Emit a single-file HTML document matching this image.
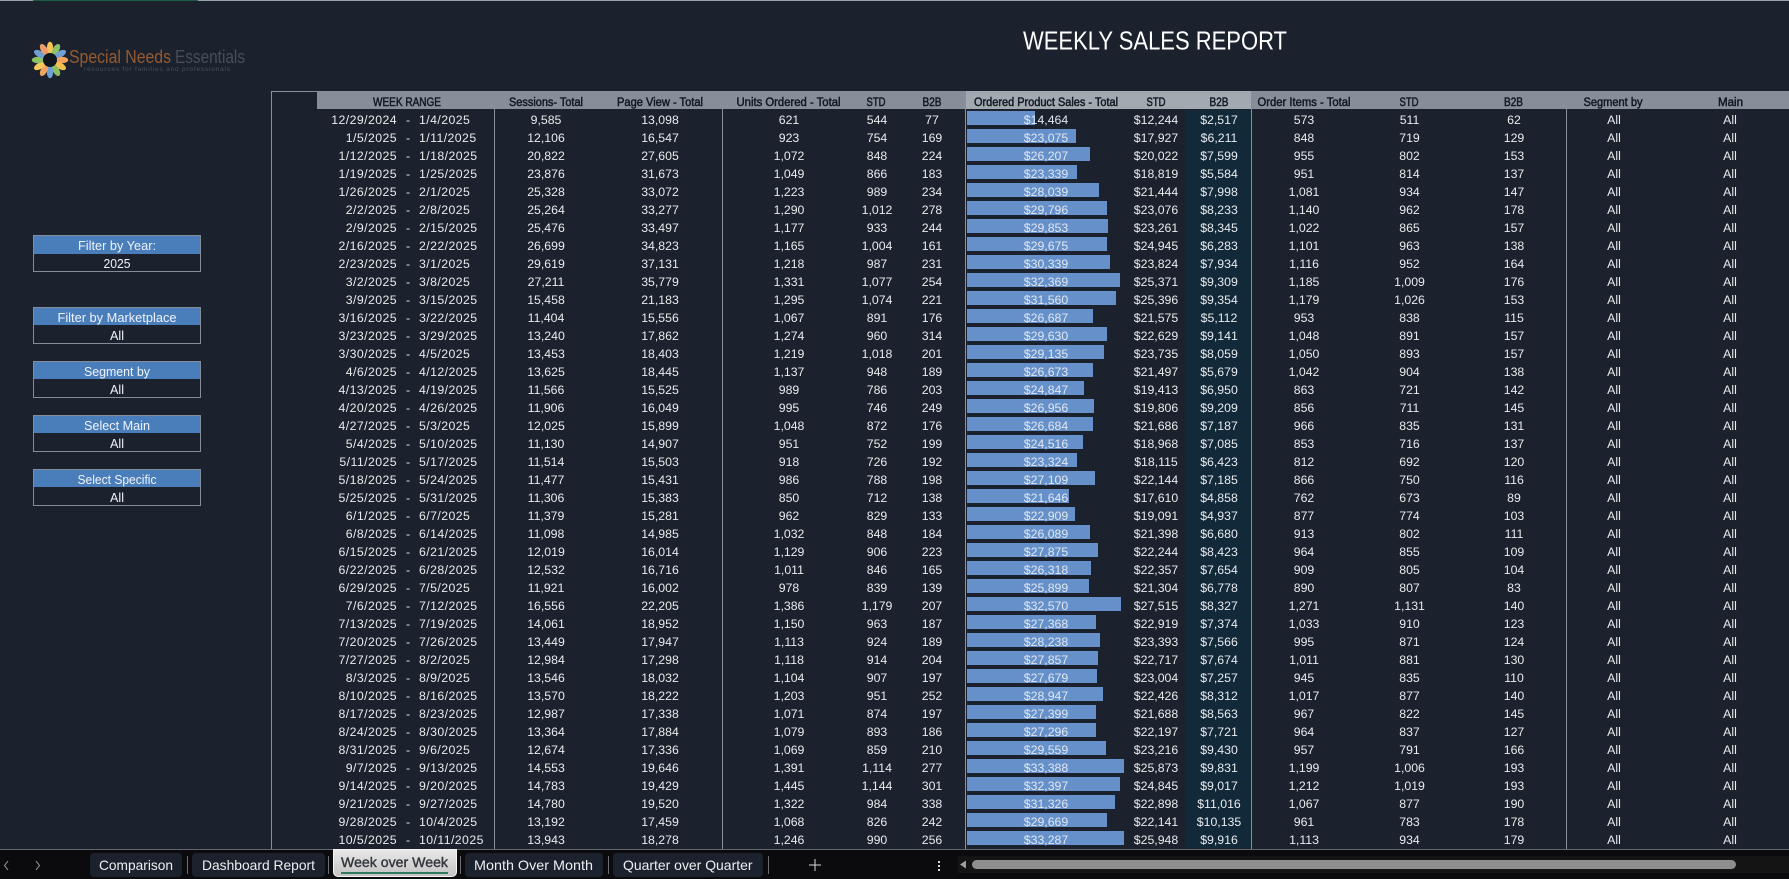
<!DOCTYPE html>
<html><head><meta charset="utf-8"><title>Weekly Sales Report</title>
<style>
html,body{margin:0;padding:0;width:1789px;height:879px;overflow:hidden;background:#1b222d}
body{position:relative;font-family:"Liberation Sans",sans-serif}
.a{position:absolute}
table{position:absolute;left:317px;top:110px;width:1480px;table-layout:fixed;border-collapse:collapse;color:#e9ebee;font-size:12.3px}
td{height:16px;padding:2px 0 0;line-height:16px;text-align:center;white-space:nowrap}
td:nth-child(1){text-align:right;letter-spacing:.42px}
td:nth-child(3){text-align:left;letter-spacing:.42px}
td:nth-child(9){background-image:linear-gradient(#6590c9,#6590c9);background-repeat:no-repeat;background-position:1px 1px;color:#dfe7f2}
td:nth-child(11){background-color:#12293a}
svg{position:absolute;left:0;top:0}
.d{position:absolute;width:1px;top:109px;height:740px;background:#87909b}
</style></head><body>
<div class="a" style="left:0;top:0;width:1789px;height:1px;background:#9aa0a8"></div>
<div class="a" style="left:33px;top:0;width:165px;height:1px;background:#1d5c45"></div>

<div class="a" style="left:317px;top:91px;width:649px;height:18px;background:#868e99"></div>
<div class="a" style="left:966px;top:91px;width:285px;height:18px;background:#a3a9b0"></div>
<div class="a" style="left:1251px;top:91px;width:538px;height:18px;background:#868e99"></div>
<div class="a" style="left:271px;top:91px;width:46px;height:1px;background:#87909b"></div>
<div class="a" style="left:271px;top:91px;width:1px;height:758px;background:#87909b"></div>

<table><colgroup><col style="width:80px"><col style="width:22px"><col style="width:75px"><col style="width:104px"><col style="width:124px"><col style="width:134px"><col style="width:42px"><col style="width:68px"><col style="width:160px"><col style="width:60px"><col style="width:66px"><col style="width:104px"><col style="width:107px"><col style="width:102px"><col style="width:98px"><col style="width:134px"></colgroup>
<tr><td>12/29/2024<td>-<td>1/4/2025<td>9,585<td>13,098<td>621<td>544<td>77<td style="background-size:68px 14px">$14,464<td>$12,244<td>$2,517<td>573<td>511<td>62<td>All<td>All
<tr><td>1/5/2025<td>-<td>1/11/2025<td>12,106<td>16,547<td>923<td>754<td>169<td style="background-size:109px 14px">$23,075<td>$17,927<td>$6,211<td>848<td>719<td>129<td>All<td>All
<tr><td>1/12/2025<td>-<td>1/18/2025<td>20,822<td>27,605<td>1,072<td>848<td>224<td style="background-size:123px 14px">$26,207<td>$20,022<td>$7,599<td>955<td>802<td>153<td>All<td>All
<tr><td>1/19/2025<td>-<td>1/25/2025<td>23,876<td>31,673<td>1,049<td>866<td>183<td style="background-size:110px 14px">$23,339<td>$18,819<td>$5,584<td>951<td>814<td>137<td>All<td>All
<tr><td>1/26/2025<td>-<td>2/1/2025<td>25,328<td>33,072<td>1,223<td>989<td>234<td style="background-size:132px 14px">$28,039<td>$21,444<td>$7,998<td>1,081<td>934<td>147<td>All<td>All
<tr><td>2/2/2025<td>-<td>2/8/2025<td>25,264<td>33,277<td>1,290<td>1,012<td>278<td style="background-size:140px 14px">$29,796<td>$23,076<td>$8,233<td>1,140<td>962<td>178<td>All<td>All
<tr><td>2/9/2025<td>-<td>2/15/2025<td>25,476<td>33,497<td>1,177<td>933<td>244<td style="background-size:141px 14px">$29,853<td>$23,261<td>$8,345<td>1,022<td>865<td>157<td>All<td>All
<tr><td>2/16/2025<td>-<td>2/22/2025<td>26,699<td>34,823<td>1,165<td>1,004<td>161<td style="background-size:140px 14px">$29,675<td>$24,945<td>$6,283<td>1,101<td>963<td>138<td>All<td>All
<tr><td>2/23/2025<td>-<td>3/1/2025<td>29,619<td>37,131<td>1,218<td>987<td>231<td style="background-size:143px 14px">$30,339<td>$23,824<td>$7,934<td>1,116<td>952<td>164<td>All<td>All
<tr><td>3/2/2025<td>-<td>3/8/2025<td>27,211<td>35,779<td>1,331<td>1,077<td>254<td style="background-size:153px 14px">$32,369<td>$25,371<td>$9,309<td>1,185<td>1,009<td>176<td>All<td>All
<tr><td>3/9/2025<td>-<td>3/15/2025<td>15,458<td>21,183<td>1,295<td>1,074<td>221<td style="background-size:149px 14px">$31,560<td>$25,396<td>$9,354<td>1,179<td>1,026<td>153<td>All<td>All
<tr><td>3/16/2025<td>-<td>3/22/2025<td>11,404<td>15,556<td>1,067<td>891<td>176<td style="background-size:126px 14px">$26,687<td>$21,575<td>$5,112<td>953<td>838<td>115<td>All<td>All
<tr><td>3/23/2025<td>-<td>3/29/2025<td>13,240<td>17,862<td>1,274<td>960<td>314<td style="background-size:140px 14px">$29,630<td>$22,629<td>$9,141<td>1,048<td>891<td>157<td>All<td>All
<tr><td>3/30/2025<td>-<td>4/5/2025<td>13,453<td>18,403<td>1,219<td>1,018<td>201<td style="background-size:137px 14px">$29,135<td>$23,735<td>$8,059<td>1,050<td>893<td>157<td>All<td>All
<tr><td>4/6/2025<td>-<td>4/12/2025<td>13,625<td>18,445<td>1,137<td>948<td>189<td style="background-size:126px 14px">$26,673<td>$21,497<td>$5,679<td>1,042<td>904<td>138<td>All<td>All
<tr><td>4/13/2025<td>-<td>4/19/2025<td>11,566<td>15,525<td>989<td>786<td>203<td style="background-size:117px 14px">$24,847<td>$19,413<td>$6,950<td>863<td>721<td>142<td>All<td>All
<tr><td>4/20/2025<td>-<td>4/26/2025<td>11,906<td>16,049<td>995<td>746<td>249<td style="background-size:127px 14px">$26,956<td>$19,806<td>$9,209<td>856<td>711<td>145<td>All<td>All
<tr><td>4/27/2025<td>-<td>5/3/2025<td>12,025<td>15,899<td>1,048<td>872<td>176<td style="background-size:126px 14px">$26,684<td>$21,686<td>$7,187<td>966<td>835<td>131<td>All<td>All
<tr><td>5/4/2025<td>-<td>5/10/2025<td>11,130<td>14,907<td>951<td>752<td>199<td style="background-size:116px 14px">$24,516<td>$18,968<td>$7,085<td>853<td>716<td>137<td>All<td>All
<tr><td>5/11/2025<td>-<td>5/17/2025<td>11,514<td>15,503<td>918<td>726<td>192<td style="background-size:110px 14px">$23,324<td>$18,115<td>$6,423<td>812<td>692<td>120<td>All<td>All
<tr><td>5/18/2025<td>-<td>5/24/2025<td>11,477<td>15,431<td>986<td>788<td>198<td style="background-size:128px 14px">$27,109<td>$22,144<td>$7,185<td>866<td>750<td>116<td>All<td>All
<tr><td>5/25/2025<td>-<td>5/31/2025<td>11,306<td>15,383<td>850<td>712<td>138<td style="background-size:102px 14px">$21,646<td>$17,610<td>$4,858<td>762<td>673<td>89<td>All<td>All
<tr><td>6/1/2025<td>-<td>6/7/2025<td>11,379<td>15,281<td>962<td>829<td>133<td style="background-size:108px 14px">$22,909<td>$19,091<td>$4,937<td>877<td>774<td>103<td>All<td>All
<tr><td>6/8/2025<td>-<td>6/14/2025<td>11,098<td>14,985<td>1,032<td>848<td>184<td style="background-size:123px 14px">$26,089<td>$21,398<td>$6,680<td>913<td>802<td>111<td>All<td>All
<tr><td>6/15/2025<td>-<td>6/21/2025<td>12,019<td>16,014<td>1,129<td>906<td>223<td style="background-size:131px 14px">$27,875<td>$22,244<td>$8,423<td>964<td>855<td>109<td>All<td>All
<tr><td>6/22/2025<td>-<td>6/28/2025<td>12,532<td>16,716<td>1,011<td>846<td>165<td style="background-size:124px 14px">$26,318<td>$22,357<td>$7,654<td>909<td>805<td>104<td>All<td>All
<tr><td>6/29/2025<td>-<td>7/5/2025<td>11,921<td>16,002<td>978<td>839<td>139<td style="background-size:122px 14px">$25,899<td>$21,304<td>$6,778<td>890<td>807<td>83<td>All<td>All
<tr><td>7/6/2025<td>-<td>7/12/2025<td>16,556<td>22,205<td>1,386<td>1,179<td>207<td style="background-size:154px 14px">$32,570<td>$27,515<td>$8,327<td>1,271<td>1,131<td>140<td>All<td>All
<tr><td>7/13/2025<td>-<td>7/19/2025<td>14,061<td>18,952<td>1,150<td>963<td>187<td style="background-size:129px 14px">$27,368<td>$22,919<td>$7,374<td>1,033<td>910<td>123<td>All<td>All
<tr><td>7/20/2025<td>-<td>7/26/2025<td>13,449<td>17,947<td>1,113<td>924<td>189<td style="background-size:133px 14px">$28,238<td>$23,393<td>$7,566<td>995<td>871<td>124<td>All<td>All
<tr><td>7/27/2025<td>-<td>8/2/2025<td>12,984<td>17,298<td>1,118<td>914<td>204<td style="background-size:131px 14px">$27,857<td>$22,717<td>$7,674<td>1,011<td>881<td>130<td>All<td>All
<tr><td>8/3/2025<td>-<td>8/9/2025<td>13,546<td>18,032<td>1,104<td>907<td>197<td style="background-size:130px 14px">$27,679<td>$23,004<td>$7,257<td>945<td>835<td>110<td>All<td>All
<tr><td>8/10/2025<td>-<td>8/16/2025<td>13,570<td>18,222<td>1,203<td>951<td>252<td style="background-size:136px 14px">$28,947<td>$22,426<td>$8,312<td>1,017<td>877<td>140<td>All<td>All
<tr><td>8/17/2025<td>-<td>8/23/2025<td>12,987<td>17,338<td>1,071<td>874<td>197<td style="background-size:129px 14px">$27,399<td>$21,688<td>$8,563<td>967<td>822<td>145<td>All<td>All
<tr><td>8/24/2025<td>-<td>8/30/2025<td>13,364<td>17,884<td>1,079<td>893<td>186<td style="background-size:129px 14px">$27,296<td>$22,197<td>$7,721<td>964<td>837<td>127<td>All<td>All
<tr><td>8/31/2025<td>-<td>9/6/2025<td>12,674<td>17,336<td>1,069<td>859<td>210<td style="background-size:139px 14px">$29,559<td>$23,216<td>$9,430<td>957<td>791<td>166<td>All<td>All
<tr><td>9/7/2025<td>-<td>9/13/2025<td>14,553<td>19,646<td>1,391<td>1,114<td>277<td style="background-size:157px 14px">$33,388<td>$25,873<td>$9,831<td>1,199<td>1,006<td>193<td>All<td>All
<tr><td>9/14/2025<td>-<td>9/20/2025<td>14,783<td>19,429<td>1,445<td>1,144<td>301<td style="background-size:153px 14px">$32,397<td>$24,845<td>$9,017<td>1,212<td>1,019<td>193<td>All<td>All
<tr><td>9/21/2025<td>-<td>9/27/2025<td>14,780<td>19,520<td>1,322<td>984<td>338<td style="background-size:148px 14px">$31,326<td>$22,898<td>$11,016<td>1,067<td>877<td>190<td>All<td>All
<tr><td>9/28/2025<td>-<td>10/4/2025<td>13,192<td>17,459<td>1,068<td>826<td>242<td style="background-size:140px 14px">$29,669<td>$22,141<td>$10,135<td>961<td>783<td>178<td>All<td>All
<tr><td>10/5/2025<td>-<td>10/11/2025<td>13,943<td>18,278<td>1,246<td>990<td>256<td style="background-size:157px 14px">$33,287<td>$25,948<td>$9,916<td>1,113<td>934<td>179<td>All<td>All
</table>

<div class="d" style="left:494px"></div>
<div class="d" style="left:722px"></div>
<div class="d" style="left:965px"></div>
<div class="d" style="left:1251px"></div>
<div class="d" style="left:1566px"></div>

<!-- bottom bar -->
<div class="a" style="left:0;top:849px;width:1789px;height:30px;background:#0b0b0d;border-top:1px solid #63676e;box-sizing:border-box"></div>
<div class="a" style="left:958px;top:856px;width:831px;height:17px;background:#141414"></div>
<div class="a" style="left:972px;top:860px;width:764px;height:9px;background:#8e8e8e;border-radius:5px"></div>
<div class="a" style="left:90px;top:853px;width:92px;height:24px;background:#1b222d;border-radius:4px"></div>
<div class="a" style="left:192px;top:853px;width:133px;height:24px;background:#1b222d;border-radius:4px"></div>
<div class="a" style="left:333px;top:849px;width:124px;height:28px;box-sizing:border-box;background:linear-gradient(#e8e8e8,#c4c4c4);border:1px solid #f4f4f4;border-radius:0 0 5px 5px"></div>
<div class="a" style="left:341px;top:872px;width:107px;height:2px;background:#2f7d5c"></div>
<div class="a" style="left:465px;top:853px;width:138px;height:24px;background:#1b222d;border-radius:4px"></div>
<div class="a" style="left:613px;top:853px;width:150px;height:24px;background:#1b222d;border-radius:4px"></div>
<div class="a" style="left:187px;top:856px;width:1px;height:18px;background:#6b6f76"></div>
<div class="a" style="left:328px;top:856px;width:1px;height:18px;background:#6b6f76"></div>
<div class="a" style="left:460px;top:856px;width:1px;height:18px;background:#6b6f76"></div>
<div class="a" style="left:608px;top:856px;width:1px;height:18px;background:#6b6f76"></div>
<div class="a" style="left:768px;top:856px;width:1px;height:18px;background:#6b6f76"></div>

<!-- side filters -->
<div class="a" style="left:33px;top:235px;width:168px;height:37px;box-sizing:border-box;border:1px solid #838c98"><div style="height:18px;background:#4a7ebb"></div></div>
<div class="a" style="left:33px;top:307px;width:168px;height:37px;box-sizing:border-box;border:1px solid #838c98"><div style="height:17px;background:#4a7ebb"></div></div>
<div class="a" style="left:33px;top:361px;width:168px;height:37px;box-sizing:border-box;border:1px solid #838c98"><div style="height:17px;background:#4a7ebb"></div></div>
<div class="a" style="left:33px;top:415px;width:168px;height:37px;box-sizing:border-box;border:1px solid #838c98"><div style="height:17px;background:#4a7ebb"></div></div>
<div class="a" style="left:33px;top:469px;width:168px;height:37px;box-sizing:border-box;border:1px solid #838c98"><div style="height:17px;background:#4a7ebb"></div></div>

<svg width="1789" height="879" viewBox="0 0 1789 879" font-family="'Liberation Sans',sans-serif">
<!-- logo -->
<g transform="translate(50 60)">
<ellipse cy="-12" rx="3.200" ry="6.200" fill="#f6c254"/>
<ellipse cy="-12" rx="3.200" ry="6.200" fill="#8fbf68" transform="rotate(30)"/>
<ellipse cy="-12" rx="3.200" ry="6.200" fill="#6f9fd6" transform="rotate(60)"/>
<ellipse cy="-12" rx="3.200" ry="6.200" fill="#f0a35f" transform="rotate(90)"/>
<ellipse cy="-12" rx="3.200" ry="6.200" fill="#f3c04f" transform="rotate(120)"/>
<ellipse cy="-12" rx="3.200" ry="6.200" fill="#8cc063" transform="rotate(150)"/>
<ellipse cy="-12" rx="3.200" ry="6.200" fill="#6f9fd6" transform="rotate(180)"/>
<ellipse cy="-12" rx="3.200" ry="6.200" fill="#f0a35f" transform="rotate(210)"/>
<ellipse cy="-12" rx="3.200" ry="6.200" fill="#f8c95c" transform="rotate(240)"/>
<ellipse cy="-12" rx="3.200" ry="6.200" fill="#8fc263" transform="rotate(270)"/>
<ellipse cy="-12" rx="3.200" ry="6.200" fill="#6f9fd6" transform="rotate(300)"/>
<ellipse cy="-12" rx="3.200" ry="6.200" fill="#ed9c6a" transform="rotate(330)"/>
<circle r="7" fill="#12171f"/>
</g>
<text x="69" y="63" font-size="18" fill="#955a30" textLength="102" lengthAdjust="spacingAndGlyphs">Special Needs</text>
<text x="175" y="63" font-size="18" fill="#474e58" textLength="70" lengthAdjust="spacingAndGlyphs">Essentials</text>
<text x="84" y="71" font-size="6.500" fill="#4a5059" textLength="146" lengthAdjust="spacing">resources for families and professionals</text>

<!-- title -->
<text x="1023" y="49.500" font-size="25.600" fill="#fff" textLength="264" lengthAdjust="spacingAndGlyphs">WEEKLY SALES REPORT</text>

<!-- headers -->
<g font-size="11.500" fill="#111821" stroke="#111821" stroke-width=".45" text-anchor="middle">
<text x="407" y="106" textLength="68" lengthAdjust="spacingAndGlyphs">WEEK RANGE</text>
<text x="546" y="106" textLength="74" lengthAdjust="spacingAndGlyphs">Sessions- Total</text>
<text x="660" y="106" textLength="86" lengthAdjust="spacingAndGlyphs">Page View - Total</text>
<text x="788.500" y="106" textLength="104" lengthAdjust="spacingAndGlyphs">Units Ordered - Total</text>
<text x="876" y="106" textLength="19" lengthAdjust="spacingAndGlyphs">STD</text>
<text x="932" y="106" textLength="19" lengthAdjust="spacingAndGlyphs">B2B</text>
<text x="1046" y="106" textLength="144" lengthAdjust="spacingAndGlyphs">Ordered Product Sales - Total</text>
<text x="1156" y="106" textLength="19" lengthAdjust="spacingAndGlyphs">STD</text>
<text x="1219" y="106" textLength="19" lengthAdjust="spacingAndGlyphs">B2B</text>
<text x="1304" y="106" textLength="93" lengthAdjust="spacingAndGlyphs">Order Items - Total</text>
<text x="1409" y="106" textLength="19" lengthAdjust="spacingAndGlyphs">STD</text>
<text x="1513.500" y="106" textLength="19" lengthAdjust="spacingAndGlyphs">B2B</text>
<text x="1613" y="106" textLength="59" lengthAdjust="spacingAndGlyphs">Segment by</text>
<text x="1730.500" y="106" textLength="25" lengthAdjust="spacingAndGlyphs">Main</text>
</g>

<!-- filter text -->
<g font-size="12.500" fill="#eef3fa" text-anchor="middle">
<text x="117" y="250" textLength="78" lengthAdjust="spacingAndGlyphs">Filter by Year:</text>
<text x="117" y="268" textLength="27" lengthAdjust="spacingAndGlyphs">2025</text>
<text x="117" y="322" textLength="119" lengthAdjust="spacingAndGlyphs">Filter by Marketplace</text>
<text x="117" y="340" textLength="14" lengthAdjust="spacingAndGlyphs">All</text>
<text x="117" y="376" textLength="66" lengthAdjust="spacingAndGlyphs">Segment by</text>
<text x="117" y="394" textLength="14" lengthAdjust="spacingAndGlyphs">All</text>
<text x="117" y="430" textLength="66" lengthAdjust="spacingAndGlyphs">Select Main</text>
<text x="117" y="448" textLength="14" lengthAdjust="spacingAndGlyphs">All</text>
<text x="117" y="484" textLength="79" lengthAdjust="spacingAndGlyphs">Select Specific</text>
<text x="117" y="502" textLength="14" lengthAdjust="spacingAndGlyphs">All</text>
</g>

<!-- tabs -->
<g font-size="14" fill="#eceef0">
<text x="99" y="870" textLength="74" lengthAdjust="spacingAndGlyphs">Comparison</text>
<text x="202" y="870" textLength="113" lengthAdjust="spacingAndGlyphs">Dashboard Report</text>
<text x="341" y="867" textLength="107" lengthAdjust="spacingAndGlyphs" fill="#33373d" stroke="#33373d" stroke-width=".4">Week over Week</text>
<text x="474" y="870" textLength="119" lengthAdjust="spacingAndGlyphs">Month Over Month</text>
<text x="623" y="870" textLength="129.500" lengthAdjust="spacingAndGlyphs">Quarter over Quarter</text>
</g>
<path d="M8 861l-3.500 4.500 3.500 4.500M36 861l3.500 4.500-3.500 4.500" fill="none" stroke="#9a9da2" stroke-width="1"/>
<path d="M815 859v12M809 865h12" stroke="#d8d8d8" stroke-width="1" fill="none"/>
<g fill="#d8d8d8"><rect x="938" y="861" width="2" height="2"/><rect x="938" y="865" width="2" height="2"/><rect x="938" y="869" width="2" height="2"/></g>
<path d="M966 860.500l-6 4 6 4z" fill="#a0a0a0"/>
</svg>
</body></html>
